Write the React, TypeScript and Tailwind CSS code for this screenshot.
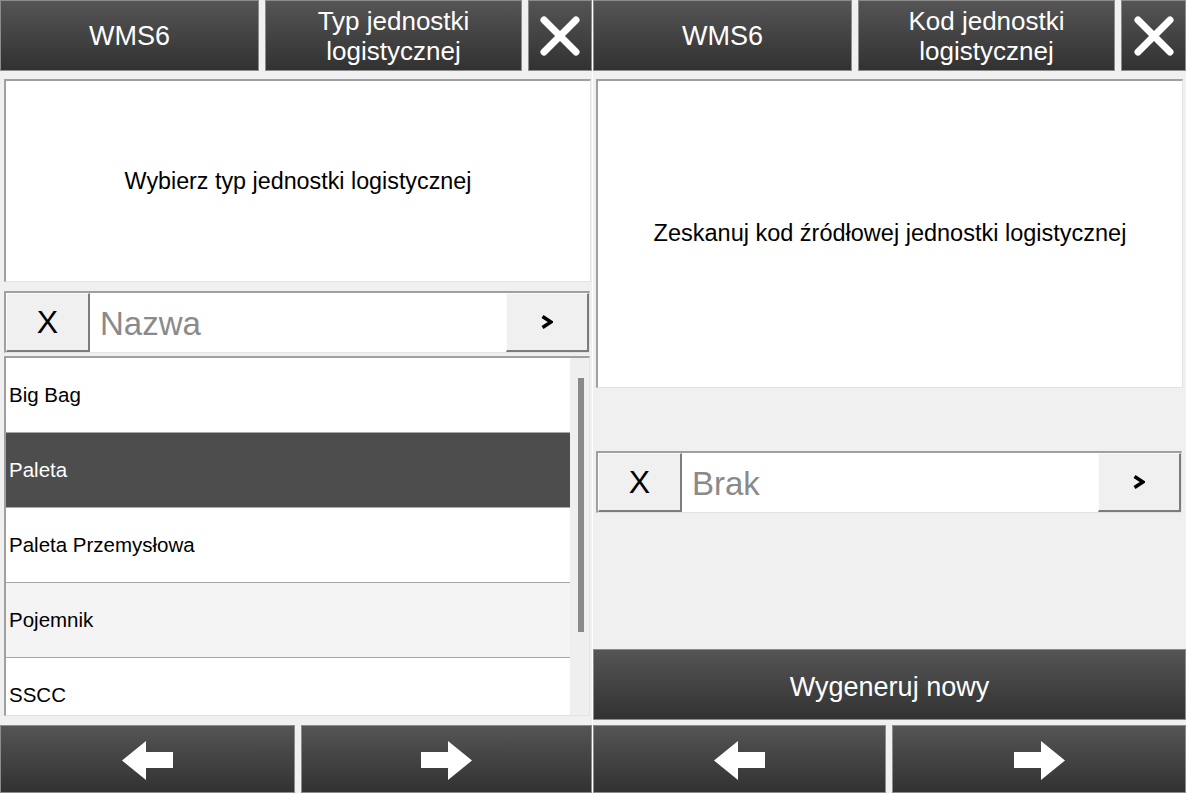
import { ReactNode } from "react";

const font = "font-['Liberation_Sans',Arial,sans-serif]";
const dark = "bg-gradient-to-b from-[#555555] to-[#323232] border border-[#8c8c8c] text-white";
const raised = "bg-[#f0f0f0] border-t border-l border-t-[#fbfbfb] border-l-[#fbfbfb] border-r-2 border-b-2 border-r-[#7c7c7c] border-b-[#7c7c7c]";
const inset = "border-t-2 border-l-2 border-t-[#a0a0a0] border-l-[#a0a0a0] border-r border-b border-r-[#e3e3e3] border-b-[#e3e3e3]";

function CloseIcon() {
  return (
    <svg width="42" height="42" viewBox="0 0 42 42">
      <path d="M5 5 L37 37 M37 5 L5 37" stroke="white" strokeWidth="7" strokeLinecap="round" />
    </svg>
  );
}

function Arrow({ dir }: { dir: "left" | "right" }) {
  return (
    <svg width="51" height="39" viewBox="0 0 51 39" className={dir === "right" ? "-scale-x-100" : ""}>
      <path d="M0 19.5 L24 0 L24 11 L51 11 L51 27 L24 27 L24 39 Z" fill="white" />
    </svg>
  );
}

function Header({ title }: { title: ReactNode }) {
  return (
    <div className="flex h-[71px] gap-[6px]">
      <div className={`${dark} w-[259px] flex items-center justify-center pt-[2px] text-[27px]`}>WMS6</div>
      <div className={`${dark} w-[257px] flex items-center justify-center text-center text-[26px] leading-[30px]`}>
        {title}
      </div>
      <div className={`${dark} flex-1 flex items-center justify-center`}>
        <CloseIcon />
      </div>
    </div>
  );
}

function SearchRow({ placeholder }: { placeholder: string }) {
  return (
    <div className={`flex h-[62px] bg-white ${inset}`}>
      <div className={`${raised} w-[84px] flex items-center justify-center text-[32px] text-black`}>X</div>
      <div className="flex-1 flex items-center pl-[10px] pt-[2px] text-[33px] text-[#8a8a8a]">{placeholder}</div>
      <div className={`${raised} w-[83px] flex items-center justify-center`}>
        <svg width="12" height="14" viewBox="0 0 12 14">
          <path d="M1.5 1.5 L10 7 L1.5 12.5" stroke="black" strokeWidth="3.6" fill="none" />
        </svg>
      </div>
    </div>
  );
}

function NavBar({ leftWidth }: { leftWidth: string }) {
  return (
    <div className="flex flex-1 gap-[6px]">
      <div className={`${dark} ${leftWidth} flex items-center justify-center pt-[2px]`}>
        <Arrow dir="left" />
      </div>
      <div className={`${dark} flex-1 flex items-center justify-center pt-[2px]`}>
        <Arrow dir="right" />
      </div>
    </div>
  );
}

const items = [
  { name: "Big Bag", bg: "bg-white text-black" },
  { name: "Paleta", bg: "bg-[#4d4d4d] text-white" },
  { name: "Paleta Przemysłowa", bg: "bg-white text-black" },
  { name: "Pojemnik", bg: "bg-[#f4f4f4] text-black" },
  { name: "SSCC", bg: "bg-white text-black" },
];

export default function App() {
  return (
    <div className={`${font} flex w-[1186px] h-[793px] bg-[#f0f0f0] overflow-hidden`}>
      {/* left panel */}
      <div className="w-[592px] flex flex-col">
        <Header title={<>Typ jednostki<br />logistycznej</>} />
        <div className={`mt-[8px] ml-[4px] mr-[1px] h-[203px] bg-white flex items-center justify-center text-[23.3px] text-black ${inset}`}>
          Wybierz typ jednostki logistycznej
        </div>
        <div className="mt-[9px] ml-[4px] mr-[2px]">
          <SearchRow placeholder="Nazwa" />
        </div>
        <div className={`mt-[3px] ml-[4px] mr-[2px] h-[360px] flex overflow-hidden ${inset}`}>
          <div className="flex-1 flex flex-col">
            {items.map((it) => (
              <div
                key={it.name}
                className={`${it.bg} h-[75px] shrink-0 flex items-center pl-[3px] text-[20.5px] border-b border-[#a8a8a8]`}
              >
                {it.name}
              </div>
            ))}
          </div>
          <div className="w-[19px] bg-[#efefef] pt-[20px] pl-[8px]">
            <div className="w-[6px] h-[254px] bg-[#8a8a8a]" />
          </div>
        </div>
        <div className="h-[9px]" />
        <NavBar leftWidth="w-[295px]" />
      </div>

      <div className="w-px bg-white" />

      {/* right panel */}
      <div className="w-[593px] flex flex-col">
        <Header title={<>Kod jednostki<br />logistycznej</>} />
        <div className={`mt-[8px] ml-[3px] mr-[3px] h-[309px] bg-white flex items-center justify-center text-[23.5px] text-black ${inset}`}>
          Zeskanuj kod źródłowej jednostki logistycznej
        </div>
        <div className="mt-[63px] ml-[3px] mr-[4px]">
          <SearchRow placeholder="Brak" />
        </div>
        <div className="flex-1" />
        <div className={`${dark} h-[71px] flex items-center justify-center pt-[5px] text-[27px]`}>Wygeneruj nowy</div>
        <div className="h-[5px]" />
        <div className="h-[68px] flex">
          <NavBar leftWidth="w-[293px]" />
        </div>
      </div>
    </div>
  );
}
